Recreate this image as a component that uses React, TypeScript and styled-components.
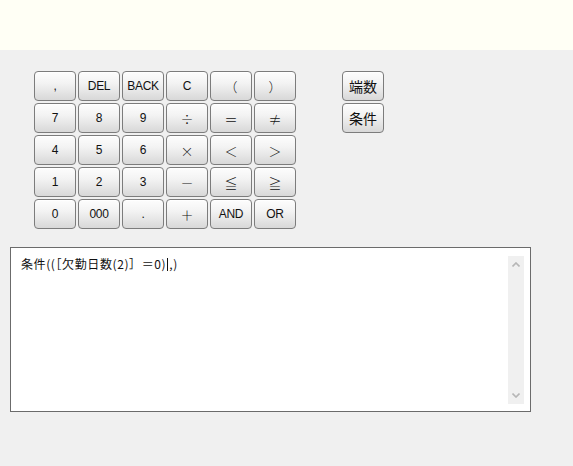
import React from "react";
import styled, { createGlobalStyle } from "styled-components";

const Global = createGlobalStyle`
  html, body { margin: 0; padding: 0; background: #f0f0f0; }
  body { font-family: "Liberation Sans", "Noto Sans CJK JP", sans-serif; }
`;

const Page = styled.div`
  width: 573px;
  height: 466px;
  background: #f0f0f0;
  display: flex;
  flex-direction: column;
`;

const Header = styled.div`
  height: 50px;
  background: #fffff5;
`;

const Body = styled.div`
  display: flex;
  flex-direction: column;
  padding: 21px 0 0 10px;
  gap: 18px;
`;

const TopRow = styled.div`
  display: flex;
  padding-left: 24px;
  gap: 46px;
  align-items: flex-start;
`;

const Keypad = styled.div`
  display: grid;
  grid-template-columns: repeat(6, 42px);
  grid-auto-rows: 30px;
  gap: 2px;
`;

const Side = styled.div`
  display: flex;
  flex-direction: column;
  gap: 2px;
`;

const Key = styled.button<{ $kind?: "cjk" | "sym" | "text" }>`
  box-sizing: border-box;
  width: 42px;
  height: 30px;
  margin: 0;
  padding: 0;
  border: 1px solid #7c7c7c;
  border-radius: 4px;
  background: linear-gradient(to bottom, #fdfdfd 0%, #f3f3f3 40%, #d8d8d8 100%);
  box-shadow: inset 0 1px 0 #ffffff;
  color: #111;
  font-family: ${(p) =>
    p.$kind === "text"
      ? `"Liberation Sans", "DejaVu Sans", sans-serif`
      : `"Noto Sans CJK JP", sans-serif`};
  font-size: ${(p) => (p.$kind === "cjk" ? "14px" : p.$kind === "sym" ? "13px" : "12px")};
  font-weight: ${(p) => (p.$kind === "sym" ? 300 : 400)};
  line-height: 1;
  display: flex;
  align-items: center;
  justify-content: center;
  letter-spacing: ${(p) => (p.$kind === "text" ? "-0.3px" : "0")};
`;

const Editor = styled.div`
  box-sizing: border-box;
  width: 521px;
  height: 165px;
  border: 1px solid #6b6b6b;
  background: #ffffff;
  display: flex;
  padding: 7px 6px 7px 10px;
  gap: 4px;
`;

const TextArea = styled.div`
  flex: 1;
  padding-top: 1px;
  font-family: "Noto Sans CJK JP", sans-serif;
  font-size: 12px;
  line-height: 16px;
  letter-spacing: 0.6px;
  color: #111;
`;

const Caret = styled.span`
  display: inline-block;
  width: 1px;
  height: 13px;
  background: #111;
  vertical-align: -2px;
  margin: 0 1px;
`;

const Scrollbar = styled.div`
  width: 16px;
  margin-top: 1px;
  background: #f0f0f0;
  display: flex;
  flex-direction: column;
  justify-content: space-between;
  align-items: center;
  padding: 6px 0;
  box-sizing: border-box;
`;

const Arrow = ({ up }: { up?: boolean }) => (
  <svg width="8" height="5" viewBox="0 0 8 5">
    <path
      d={up ? "M0.5 4.5 L4 1 L7.5 4.5" : "M0.5 0.5 L4 4 L7.5 0.5"}
      stroke="#b6b6b6"
      strokeWidth="1.6"
      fill="none"
    />
  </svg>
);

type K = { label: string; kind: "text" | "sym" };
const t = (label: string): K => ({ label, kind: "text" });
const s = (label: string): K => ({ label, kind: "sym" });

const keys: K[] = [
  t(","), t("DEL"), t("BACK"), t("C"), s("（"), s("）"),
  t("7"), t("8"), t("9"), s("÷"), s("＝"), s("≠"),
  t("4"), t("5"), t("6"), s("×"), s("＜"), s("＞"),
  t("1"), t("2"), t("3"), s("－"), s("≦"), s("≧"),
  t("0"), t("000"), t("."), s("＋"), t("AND"), t("OR"),
];

export default function App() {
  return (
    <Page>
      <Global />
      <Header />
      <Body>
        <TopRow>
          <Keypad>
            {keys.map((k, i) => (
              <Key key={i} $kind={k.kind}>
                {k.label}
              </Key>
            ))}
          </Keypad>
          <Side>
            <Key $kind="cjk">端数</Key>
            <Key $kind="cjk">条件</Key>
          </Side>
        </TopRow>
        <Editor>
          <TextArea>
            条件((［欠勤日数(2)］＝0)<Caret />,)
          </TextArea>
          <Scrollbar>
            <Arrow up />
            <Arrow />
          </Scrollbar>
        </Editor>
      </Body>
    </Page>
  );
}
